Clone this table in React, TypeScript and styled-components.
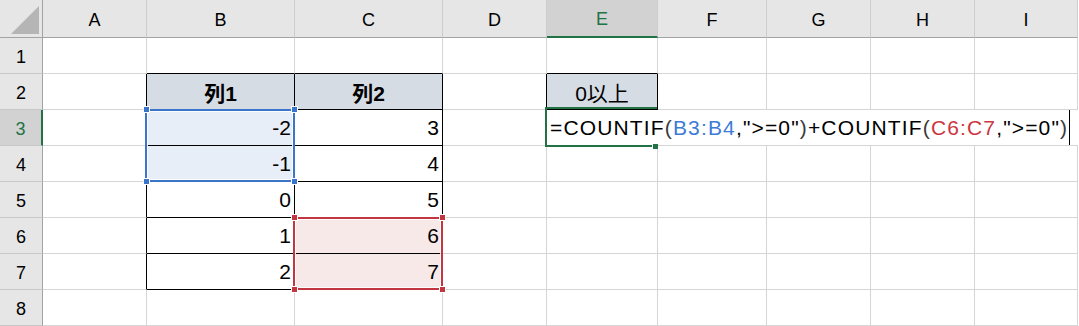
import React from "react";
import styled, { createGlobalStyle } from "styled-components";

const GlobalStyle = createGlobalStyle`
  html, body {
    margin: 0;
    padding: 0;
    background: #fff;
    overflow: hidden;
  }
  body {
    font-family: "Liberation Sans", "Noto Sans CJK JP", sans-serif;
  }
`;

const COLS = ["A", "B", "C", "D", "E", "F", "G", "H", "I"];
const HEAD_W = 43;
const COL_W = [104, 148, 148, 104, 111, 109, 104, 104, 103];
const HEAD_H = 38;
const ROW_H = 36;
const ROWS = 8;

const GREEN = "#217346";
const BLUE = "#3b74cb";
const RED = "#c2363f";
const GRID = "#d5d5d5";
const HEAD_LINE = "#a3a3a3";

const HEAD_FILL = "#d6dce4";
const BLUE_FILL = "#e8eef8";
const RED_FILL = "#f8e9e9";

type CellData = {
  text: string;
  align?: "left" | "center" | "right";
  bold?: boolean;
  fill?: string;
};

const cells: Record<string, CellData> = {
  B2: { text: "列1", align: "center", bold: true, fill: HEAD_FILL },
  C2: { text: "列2", align: "center", bold: true, fill: HEAD_FILL },
  E2: { text: "0以上", align: "center", fill: HEAD_FILL },
  B3: { text: "-2", fill: BLUE_FILL },
  C3: { text: "3" },
  B4: { text: "-1", fill: BLUE_FILL },
  C4: { text: "4" },
  B5: { text: "0" },
  C5: { text: "5" },
  B6: { text: "1" },
  C6: { text: "6", fill: RED_FILL },
  B7: { text: "2" },
  C7: { text: "7", fill: RED_FILL },
};

// blocks with thin black borders (1-based column / row)
const tables = [
  { c1: 2, c2: 3, r1: 2, r2: 7 },
  { c1: 5, c2: 5, r1: 2, r2: 2 },
];

const rightEdge = (c: number, r: number) =>
  tables.some((t) => r >= t.r1 && r <= t.r2 && c >= t.c1 - 1 && c <= t.c2);
const bottomEdge = (c: number, r: number) =>
  tables.some((t) => c >= t.c1 && c <= t.c2 && r >= t.r1 - 1 && r <= t.r2);

type Area = { c1: number; c2: number; r1: number; r2: number };

// sheet column / row numbers -> grid lines (header track comes first)
const gridArea = (a: Area) =>
  `${a.r1 + 1} / ${a.c1 + 1} / ${a.r2 + 2} / ${a.c2 + 2}`;

const tracks = `
  grid-template-columns: ${HEAD_W}px ${COL_W.map((w) => `${w}px`).join(" ")};
  grid-template-rows: ${HEAD_H}px repeat(${ROWS}, ${ROW_H}px);
`;

// the cell grid and the selection layer share one stack
const Frame = styled.div`
  display: grid;
  width: 1079px;
  height: 326px;
  overflow: hidden;
  color: #000;
  font-family: "Liberation Sans", "Noto Sans CJK JP", sans-serif;

  & > * {
    grid-area: 1 / 1;
  }
`;

const Sheet = styled.div`
  display: grid;
  ${tracks}
`;

const Overlay = styled.div`
  display: grid;
  ${tracks}
  pointer-events: none;
`;

const Corner = styled.div`
  box-sizing: border-box;
  background: #e6e6e6;
  border-right: 1px solid ${HEAD_LINE};
  border-bottom: 1px solid ${HEAD_LINE};

  svg {
    display: block;
  }
`;

const ColHeader = styled.div<{ $active?: boolean }>`
  box-sizing: border-box;
  display: flex;
  align-items: center;
  justify-content: center;
  padding-top: 3px;
  font-size: 18px;
  background: ${(p) => (p.$active ? "#d2d2d2" : "#e6e6e6")};
  color: ${(p) => (p.$active ? GREEN : "#000")};
  border-right: 1px solid #cdcdcd;
  border-bottom: ${(p) => (p.$active ? `2px solid ${GREEN}` : `1px solid ${HEAD_LINE}`)};
`;

const RowHeader = styled.div<{ $active?: boolean }>`
  box-sizing: border-box;
  display: flex;
  align-items: center;
  justify-content: center;
  padding-top: 3px;
  font-size: 18px;
  background: ${(p) => (p.$active ? "#d2d2d2" : "#e6e6e6")};
  color: ${(p) => (p.$active ? GREEN : "#000")};
  border-bottom: 1px solid #c8c8c8;
  border-right: ${(p) => (p.$active ? `2px solid ${GREEN}` : `1px solid ${HEAD_LINE}`)};
`;

const Cell = styled.div<{
  $align: "left" | "center" | "right";
  $bold?: boolean;
  $fill?: string;
  $edgeR?: boolean;
  $edgeB?: boolean;
}>`
  box-sizing: border-box;
  display: flex;
  align-items: center;
  justify-content: ${(p) =>
    p.$align === "center" ? "center" : p.$align === "left" ? "flex-start" : "flex-end"};
  padding: 1px 3px 0;
  font-size: 21px;
  font-weight: ${(p) => (p.$bold ? 700 : 400)};
  background: ${(p) => p.$fill ?? "#fff"};
  border-right: 1px solid ${(p) => (p.$edgeR ? "#000" : GRID)};
  border-bottom: 1px solid ${(p) => (p.$edgeB ? "#000" : GRID)};
  white-space: nowrap;
`;

// coloured outline of a range referenced by the formula
const RangeBox = styled.div<{ $area: string; $color: string }>`
  grid-area: ${(p) => p.$area};
  position: relative;
  z-index: 1;
  margin: -1px 0 0 -2px;
  box-sizing: border-box;
  border: 2px solid ${(p) => p.$color};
  box-shadow: inset 0 0 0 1px rgba(255, 255, 255, 0.85);
`;

const Handle = styled.span<{ $corner: "tl" | "tr" | "bl" | "br"; $color: string }>`
  position: absolute;
  ${(p) => (p.$corner[0] === "t" ? "top: -5px;" : "bottom: -5px;")}
  ${(p) => (p.$corner[1] === "l" ? "left: -4px;" : "right: -5px;")}
  width: 5px;
  height: 5px;
  background: ${(p) => p.$color};
  border: 1px solid #fff;
`;

const ActiveCell = styled.div<{ $area: string }>`
  grid-area: ${(p) => p.$area};
  position: relative;
  z-index: 3;
  margin: -3px 1px -1px -2px;
  box-sizing: border-box;
  border: 2px solid ${GREEN};
  border-right: none;
`;

const FillHandle = styled.span`
  position: absolute;
  right: -1px;
  bottom: -4px;
  width: 5px;
  height: 5px;
  background: ${GREEN};
  border-left: 1px solid #fff;
  border-top: 1px solid #fff;
`;

// in-cell formula editor, spilling over the cells to its right
const Editor = styled.div<{ $area: string }>`
  grid-area: ${(p) => p.$area};
  position: relative;
  z-index: 2;
  margin-bottom: 1px;
  background: #fff;
  display: flex;
  align-items: center;
  padding-left: 3px;
  font-size: 21px;
  letter-spacing: 1.15px;
  white-space: nowrap;
`;

const Token = styled.span<{ $tone?: "blue" | "red" | "paren" }>`
  color: ${(p) =>
    p.$tone === "blue"
      ? "#3d7bd4"
      : p.$tone === "red"
        ? "#cc3641"
        : p.$tone === "paren"
          ? "#3a3a3a"
          : "#000"};
`;

const Caret = styled.span`
  display: inline-block;
  width: 1px;
  height: 35px;
  margin-left: 1px;
  background: #000;
`;

const formula: { text: string; tone?: "blue" | "red" | "paren" }[] = [
  { text: "=COUNTIF" },
  { text: "(", tone: "paren" },
  { text: "B3:B4", tone: "blue" },
  { text: ",\">=0\"" },
  { text: ")", tone: "paren" },
  { text: "+COUNTIF" },
  { text: "(", tone: "paren" },
  { text: "C6:C7", tone: "red" },
  { text: ",\">=0\"" },
  { text: ")", tone: "paren" },
];

const ranges = [
  { area: { c1: 2, c2: 2, r1: 3, r2: 4 }, color: BLUE },
  { area: { c1: 3, c2: 3, r1: 6, r2: 7 }, color: RED },
];

const corners = ["tl", "tr", "bl", "br"] as const;

const Spreadsheet = () => {
  const activeCol = 5;
  const activeRow = 3;

  return (
    <Frame>
      <Sheet>
        <Corner>
          <svg width={HEAD_W - 1} height={HEAD_H - 1} viewBox={`0 0 ${HEAD_W - 1} ${HEAD_H - 1}`}>
            <polygon points="39,6 39,34 11,34" fill="#b5b5b5" />
          </svg>
        </Corner>
        {COLS.map((name, i) => (
          <ColHeader key={name} $active={i + 1 === activeCol}>
            {name}
          </ColHeader>
        ))}

        {Array.from({ length: ROWS }, (_, ri) => {
          const r = ri + 1;
          return (
            <React.Fragment key={r}>
              <RowHeader $active={r === activeRow}>{r}</RowHeader>
              {COLS.map((name, ci) => {
                const c = ci + 1;
                const data = cells[`${name}${r}`];
                return (
                  <Cell
                    key={name}
                    $align={data?.align ?? "right"}
                    $bold={data?.bold}
                    $fill={data?.fill}
                    $edgeR={rightEdge(c, r)}
                    $edgeB={bottomEdge(c, r)}
                  >
                    {data?.text}
                  </Cell>
                );
              })}
            </React.Fragment>
          );
        })}
      </Sheet>

      <Overlay>
        {ranges.map((g, i) => (
          <RangeBox key={i} $area={gridArea(g.area)} $color={g.color}>
            {corners.map((k) => (
              <Handle key={k} $corner={k} $color={g.color} />
            ))}
          </RangeBox>
        ))}

        <Editor $area={gridArea({ c1: activeCol, c2: COLS.length, r1: activeRow, r2: activeRow })}>
          {formula.map((t, i) => (
            <Token key={i} $tone={t.tone}>
              {t.text}
            </Token>
          ))}
          <Caret />
        </Editor>
        <ActiveCell $area={gridArea({ c1: activeCol, c2: activeCol, r1: activeRow, r2: activeRow })}>
          <FillHandle />
        </ActiveCell>
      </Overlay>
    </Frame>
  );
};

export default function App() {
  return (
    <>
      <GlobalStyle />
      <Spreadsheet />
    </>
  );
}
